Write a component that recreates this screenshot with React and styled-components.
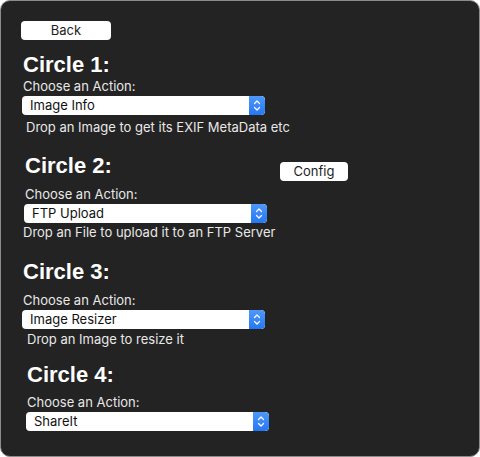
import React from 'react';
import styled, { createGlobalStyle } from 'styled-components';

const GlobalStyle = createGlobalStyle`
  html, body {
    margin: 0;
    padding: 0;
    background: #fff;
  }
  body {
    font-family: Inter, "Liberation Sans", sans-serif;
  }
`;

const Window = styled.div`
  box-sizing: border-box;
  width: 480px;
  height: 457px;
  background: #232323;
  border: 1px solid #8c8c8c;
  border-radius: 10px;
  padding: 20px 0 0 20px;
  overflow: hidden;
`;

const Button = styled.button`
  display: block;
  box-sizing: border-box;
  width: ${p => p.$width}px;
  height: 19px;
  margin: 0;
  padding: 0;
  border: none;
  border-radius: 4px;
  background: #fff;
  color: #1e1e1e;
  font-family: Inter, "Liberation Sans", sans-serif;
  font-size: 13px;
  line-height: 19px;
  text-align: center;
`;

const Section = styled.section`
  margin-left: ${p => p.$left}px;
  margin-top: ${p => p.$top}px;
`;

const HeadRow = styled.div`
  display: flex;
  align-items: flex-end;
  justify-content: space-between;
  width: ${p => (p.$width ? `${p.$width}px` : 'auto')};
`;

const Heading = styled.h2`
  margin: 0;
  color: #fff;
  font-family: "Liberation Sans", Arial, sans-serif;
  font-size: 22px;
  line-height: 26px;
  font-weight: 700;
`;

const ConfigButton = styled(Button)`
  margin-bottom: -2px;
`;

const Label = styled.div`
  margin-top: ${p => p.$gap}px;
  color: #e8e8e8;
  font-size: 13px;
  line-height: 16px;
`;

const Select = styled.div`
  display: flex;
  width: 243px;
  height: 19px;
  margin-top: 2px;
  margin-left: -1px;
  background: #fff;
  border-radius: 4px;
  overflow: hidden;
`;

const SelectText = styled.span`
  flex: 1;
  padding-left: 8px;
  color: #111;
  font-size: 13px;
  line-height: 19px;
`;

const Stepper = styled.span`
  display: flex;
  align-items: center;
  justify-content: center;
  width: 16px;
  height: 19px;
  background: linear-gradient(#4e98fb, #2478f2);
  border-radius: 0 4px 4px 0;
`;

const Desc = styled.div`
  margin-top: ${p => p.$gap}px;
  margin-left: ${p => p.$shift}px;
  color: #e8e8e8;
  font-size: 13px;
  line-height: 16px;
`;

const Chevrons = () => (
  <svg width="8" height="13" viewBox="0 0 8 13">
    <path d="M1.5 4.5 L4 2 L6.5 4.5 M1.5 8.5 L4 11 L6.5 8.5" fill="none" stroke="#fff" strokeWidth="1.3" strokeLinecap="round" strokeLinejoin="round" />
  </svg>
);

const Dropdown = ({ value }) => (
  <Select>
    <SelectText>{value}</SelectText>
    <Stepper><Chevrons /></Stepper>
  </Select>
);

const circles = [
  { n: 1, left: 2, top: 12, labelGap: 0, value: 'Image Info', desc: 'Drop an Image to get its EXIF MetaData etc', descGap: 4, shift: 3 },
  { n: 2, left: 4, top: 18, labelGap: 7, value: 'FTP Upload', desc: 'Drop an File to upload it to an FTP Server', descGap: 1, shift: -2, config: true },
  { n: 3, left: 2, top: 19, labelGap: 7, value: 'Image Resizer', desc: 'Drop an Image to resize it', descGap: 2, shift: 4 },
  { n: 4, left: 6, top: 15, labelGap: 6, value: 'ShareIt' },
];

const App = () => (
  <Window>
    <GlobalStyle />
    <Button $width={90}>Back</Button>
    {circles.map(c => (
      <Section key={c.n} $left={c.left} $top={c.top}>
        <HeadRow $width={c.config ? 323 : 0}>
          <Heading>Circle {c.n}:</Heading>
          {c.config && <ConfigButton $width={68}>Config</ConfigButton>}
        </HeadRow>
        <Label $gap={c.labelGap}>Choose an Action:</Label>
        <Dropdown value={c.value} />
        {c.desc && <Desc $gap={c.descGap} $shift={c.shift}>{c.desc}</Desc>}
      </Section>
    ))}
  </Window>
);

export default App;
